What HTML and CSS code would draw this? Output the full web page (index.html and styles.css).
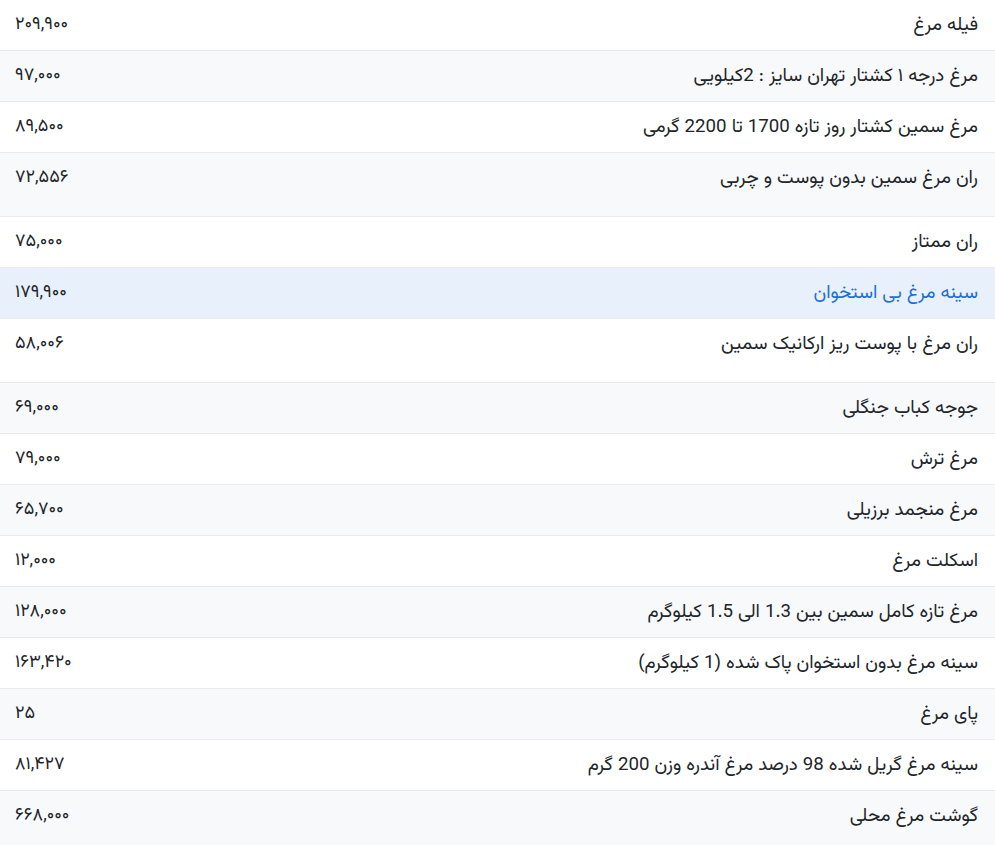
FILE: index.html
```html
<!DOCTYPE html>
<html lang="fa" dir="rtl">
<head>
<meta charset="utf-8">
<link rel="stylesheet" href="styles.css">
</head>
<body>
<table class="prices">
<tbody>
<tr><td class="name">فیله مرغ</td><td class="price">۲۰۹,۹۰۰</td></tr>
<tr class="alt"><td class="name">مرغ درجه ۱ کشتار تهران سایز : 2کیلویی</td><td class="price">۹۷,۰۰۰</td></tr>
<tr><td class="name">مرغ سمین کشتار روز تازه 1700 تا 2200 گرمی</td><td class="price">۸۹,۵۰۰</td></tr>
<tr class="alt tall"><td class="name">ران مرغ سمین بدون پوست و چربی</td><td class="price">۷۲,۵۵۶</td></tr>
<tr><td class="name">ران ممتاز</td><td class="price">۷۵,۰۰۰</td></tr>
<tr class="active"><td class="name">سینه مرغ بی استخوان</td><td class="price">۱۷۹,۹۰۰</td></tr>
<tr class="tall"><td class="name">ران مرغ با پوست ریز ارکانیک سمین</td><td class="price">۵۸,۰۰۶</td></tr>
<tr class="alt"><td class="name">جوجه کباب جنگلی</td><td class="price">۶۹,۰۰۰</td></tr>
<tr><td class="name">مرغ ترش</td><td class="price">۷۹,۰۰۰</td></tr>
<tr class="alt"><td class="name">مرغ منجمد برزیلی</td><td class="price">۶۵,۷۰۰</td></tr>
<tr><td class="name">اسکلت مرغ</td><td class="price">۱۲,۰۰۰</td></tr>
<tr class="alt"><td class="name">مرغ تازه کامل سمین بین 1.3 الی 1.5 کیلوگرم</td><td class="price">۱۲۸,۰۰۰</td></tr>
<tr><td class="name">سینه مرغ بدون استخوان پاک شده (1 کیلوگرم)</td><td class="price">۱۶۳,۴۲۰</td></tr>
<tr class="alt"><td class="name">پای مرغ</td><td class="price">۲۵</td></tr>
<tr><td class="name">سینه مرغ گریل شده 98 درصد مرغ آندره وزن 200 گرم</td><td class="price">۸۱,۴۲۷</td></tr>
<tr class="alt tall"><td class="name">گوشت مرغ محلی</td><td class="price">۶۶۸,۰۰۰</td></tr>
</tbody>
</table>
</body>
</html>
```

FILE: styles.css
```css
html, body {
  margin: 0;
  padding: 0;
  background: #ffffff;
}
body {
  font-family: "Vazirmatn", "Vazir", "Noto Sans Arabic", "DejaVu Sans", sans-serif;
  font-size: 18px;
  color: #212529;
}
.prices {
  width: 100%;
  border-collapse: separate;
  border-spacing: 0;
}
.prices td {
  height: 50px;
  padding: 0 17px 0 15px;
  vertical-align: middle;
  border-bottom: 1px solid #e9ecef;
}
.prices .name {
  text-align: right;
  font-size: 18.7px;
}
.prices .price {
  text-align: left;
  width: 120px;
}
.prices tr.alt td {
  background: #f8f9fa;
}
.prices tr.tall td {
  padding-bottom: 13px;
}
.prices tr.active td {
  background: #e8f0fb;
}
.prices tr.active .name {
  color: #1c6fd8;
}
```
